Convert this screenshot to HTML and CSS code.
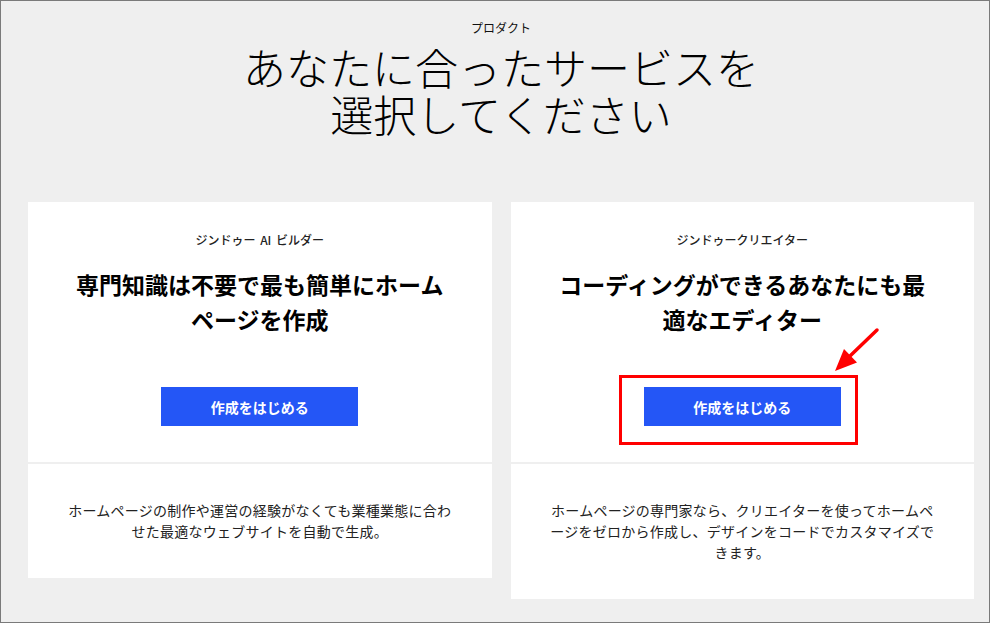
FILE: index.html
```html
<!DOCTYPE html>
<html lang="ja">
<head>
<meta charset="utf-8">
<title>プロダクト</title>
<link rel="stylesheet" href="styles.css">
</head>
<body>
<div class="frame">
  <header class="intro">
    <p class="eyebrow">プロダクト</p>
    <h1 class="title"><span class="title-line">あなたに合ったサービスを</span><span class="title-line">選択してください</span></h1>
  </header>
  <div class="cards">
    <section class="card">
      <div class="card-top">
        <p class="card-label">ジンドゥー AI ビルダー</p>
        <h2 class="card-title">専門知識は不要で最も簡単にホームページを作成</h2>
        <div class="cta"><a class="btn" href="#">作成をはじめる</a></div>
      </div>
      <div class="card-bottom">
        <p>ホームページの制作や運営の経験がなくても業種業態に合わせた最適なウェブサイトを自動で生成。</p>
      </div>
    </section>
    <section class="card">
      <div class="card-top">
        <p class="card-label">ジンドゥークリエイター</p>
        <h2 class="card-title">コーディングができるあなたにも最適なエディター</h2>
        <div class="cta">
          <span class="mark">
            <a class="btn" href="#">作成をはじめる</a>
            <span class="highlight"></span>
            <svg class="arrow" width="52" height="52" viewBox="0 0 52 52">
              <line x1="46" y1="5" x2="19" y2="31" stroke="#f00" stroke-width="3.5" stroke-linecap="round"/>
              <polygon points="4,46 26,37.5 13,24" fill="#f00"/>
            </svg>
          </span>
        </div>
      </div>
      <div class="card-bottom">
        <p>ホームページの専門家なら、クリエイターを使ってホームページをゼロから作成し、デザインをコードでカスタマイズできます。</p>
      </div>
    </section>
  </div>
</div>
</body>
</html>
```

FILE: styles.css
```css
* { box-sizing: border-box; }
html, body { margin: 0; padding: 0; }
body {
  font-family: "Noto Sans CJK JP", "Noto Sans", sans-serif;
  color: #111;
  background: #efefef;
}
.frame {
  width: 990px;
  height: 623px;
  border: 1px solid #7a7a7a;
  background: #efefef;
  padding: 16px 15px 0 27px;
  overflow: hidden;
}
.intro { text-align: center; }
.eyebrow {
  margin: 0;
  font-size: 12px;
  line-height: 22px;
  font-weight: 400;
  color: #111;
}
.title {
  margin: 4px 0 0;
  font-size: 43px;
  line-height: 47px;
  font-weight: 300;
  color: #000;
}
.title-line {
  display: block;
  height: 47px;
}
.cards {
  margin-top: 65px;
  display: grid;
  grid-template-columns: 1fr 1fr;
  column-gap: 19px;
  align-items: start;
}
.card {
  display: flex;
  flex-direction: column;
  gap: 2px;
}
.card-top {
  background: #fff;
  height: 260px;
  padding: 29px 44px 0;
  text-align: center;
}
.card-label {
  margin: 0;
  font-size: 12px;
  line-height: 18px;
  font-weight: 500;
  color: #222;
  word-spacing: 2px;
}
.card-title {
  margin: 18px 0 0;
  font-size: 23px;
  line-height: 34.5px;
  font-weight: 700;
  color: #000;
}
.cta {
  margin-top: 51px;
  display: flex;
  justify-content: center;
}
.btn {
  display: flex;
  align-items: center;
  justify-content: center;
  width: 197px;
  height: 39px;
  background: #2456f6;
  color: #fff;
  font-size: 14px;
  font-weight: 700;
  text-decoration: none;
}
.mark { position: relative; display: block; }
.highlight {
  position: absolute;
  left: -25px;
  top: -12px;
  width: 239px;
  height: 70px;
  border: 3px solid #f00;
}
.arrow {
  position: absolute;
  left: 187px;
  top: -62px;
}
.card-bottom {
  background: #fff;
  padding: 36px 36px;
  text-align: center;
}
.card-bottom p {
  margin: 0;
  font-size: 14px;
  line-height: 21px;
  letter-spacing: 0.25px;
  color: #222;
}
```
